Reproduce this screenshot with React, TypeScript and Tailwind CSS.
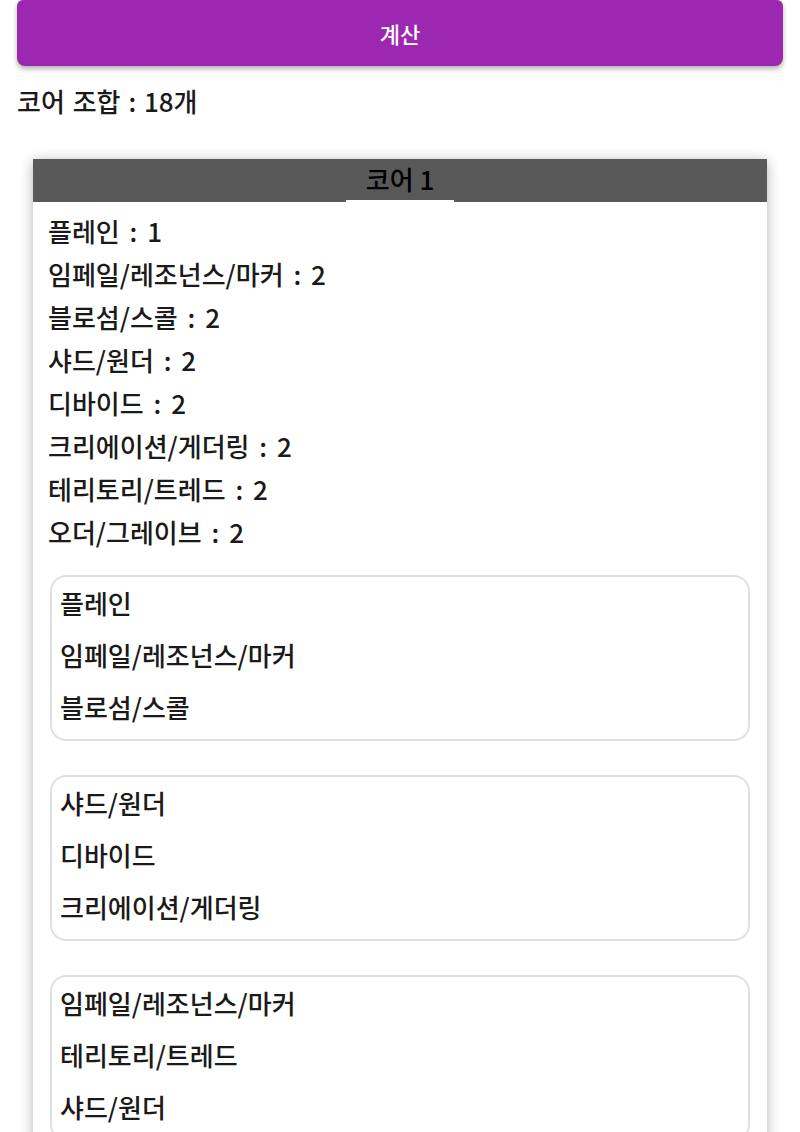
const counts = [
  { name: "플레인", n: 1 },
  { name: "임페일/레조넌스/마커", n: 2 },
  { name: "블로섬/스콜", n: 2 },
  { name: "샤드/원더", n: 2 },
  { name: "디바이드", n: 2 },
  { name: "크리에이션/게더링", n: 2 },
  { name: "테리토리/트레드", n: 2 },
  { name: "오더/그레이브", n: 2 },
];

const combos = [
  ["플레인", "임페일/레조넌스/마커", "블로섬/스콜"],
  ["샤드/원더", "디바이드", "크리에이션/게더링"],
  ["임페일/레조넌스/마커", "테리토리/트레드", "샤드/원더"],
];

export default function App() {
  return (
    <div
      className="min-h-screen bg-white text-[#1a1a1a] font-medium px-[17px]"
      style={{ fontFamily: '"Noto Sans CJK KR", "Noto Sans", sans-serif' }}
    >
      <button className="w-full h-[66px] rounded-b-lg rounded-t-md bg-[#9c27b0] text-white text-[22px] font-medium shadow-[0_3px_5px_rgba(0,0,0,0.3)]">
        계산
      </button>

      <p className="mt-[18px] text-[26px] leading-[34px] [word-spacing:2px]">코어 조합 : 18개</p>

      <div className="mx-[16px] mt-[41px] bg-white shadow-[0_2px_12px_rgba(0,0,0,0.3)]">
        <div className="relative h-[43px] pb-[5px] bg-[#595959] flex items-center justify-center text-[26px] text-black">
          코어 1
          <div className="absolute bottom-0 left-[313px] w-[108px] h-[2px] bg-white" />
        </div>
        <div className="px-[15px] pt-[7px] pb-[23px]">
          {counts.map((c) => (
            <div key={c.name} className="text-[26px] leading-[43px] [word-spacing:4px]">
              {c.name} : {c.n}
            </div>
          ))}
          <div className="mt-[22px] flex flex-col gap-[34px]">
            {combos.map((combo, i) => (
              <div key={i} className="mx-[2px] border-2 border-[#e0e0e0] rounded-2xl px-[8px] pb-[6px]">
                {combo.map((name, j) => (
                  <div key={j} className="text-[26px] leading-[52px]">
                    {name}
                  </div>
                ))}
              </div>
            ))}
          </div>
        </div>
      </div>
    </div>
  );
}
